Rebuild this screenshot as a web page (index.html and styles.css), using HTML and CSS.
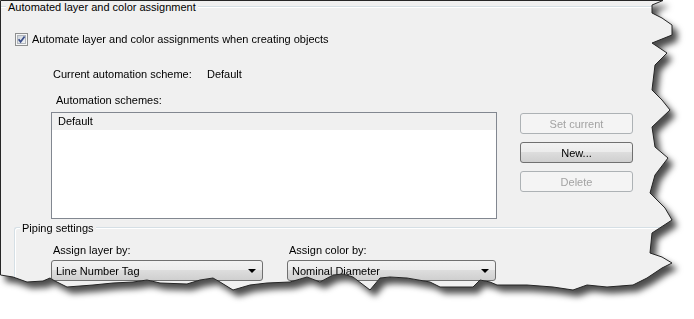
FILE: index.html
```html
<!DOCTYPE html>
<html lang="en">
<head>
<meta charset="UTF-8">
<meta name="viewport" content="width=device-width, initial-scale=1.0">
<title>Automated layer and color assignment</title>
<link rel="stylesheet" href="styles.css">
</head>
<body>

<div class="shot">
  <div class="panel">
    <div class="group main">
      <div class="group-title">Automated layer and color assignment</div>

      <label class="check-row">
        <svg class="checkbox" width="13" height="13" viewBox="0 0 13 13">
          <defs>
            <linearGradient id="cbFill" x1="0" y1="0" x2="1" y2="1">
              <stop offset="0" stop-color="#cdd3da"/>
              <stop offset="1" stop-color="#f4f6f8"/>
            </linearGradient>
          </defs>
          <rect x="0.5" y="0.5" width="12" height="12" fill="#f6f6f6" stroke="#8e8f8f"/>
          <rect x="2.5" y="2.5" width="8" height="8" fill="url(#cbFill)" stroke="#b2b7bd"/>
          <path d="M3.6 6.3 L5.6 8.8 L9.6 3.4" stroke="#3c4f8a" stroke-width="1.7" fill="none"/>
        </svg>
        <span>Automate layer and color assignments when creating objects</span>
      </label>

      <div class="scheme-row">
        <span class="scheme-name">Current automation scheme:</span>
        <span>Default</span>
      </div>

      <div class="schemes-label">Automation schemes:</div>

      <div class="schemes">
        <div class="listbox">
          <div class="list-item selected">Default</div>
        </div>
        <div class="buttons">
          <button class="btn" disabled>Set current</button>
          <button class="btn">New...</button>
          <button class="btn" disabled>Delete</button>
        </div>
      </div>

      <div class="group sub">
        <div class="group-title">Piping settings</div>
        <div class="combos">
          <div class="field">
            <div class="field-label">Assign layer by:</div>
            <div class="combo"><span>Line Number Tag</span><i class="arrow"></i></div>
          </div>
          <div class="field">
            <div class="field-label">Assign color by:</div>
            <div class="combo"><span>Nominal Diameter</span><i class="arrow"></i></div>
          </div>
        </div>
      </div>
    </div>
  </div>

  <!-- torn paper outline -->
  <svg class="edge" width="694" height="319" viewBox="0 0 694 319">
    <polygon fill="none" stroke="#262626" stroke-width="1"
      points="0.5,0.5 663,0.5 652,5 652,13 662,18 672,25 672,35 652,43 667,53 655,65 652,90 662,100 670,110 652,127 655,147 668,158 655,175 650,193 665,208 672,220 652,233 650,253 662,257 672,263 662,268 647,278 633,285 607,287 587,285 573,290 553,287 527,285 497,285 490,282 480,280 473,287 440,287 430,282 407,278 390,277 380,278 370,290 353,277 343,274 333,275 320,282 307,277 290,282 267,283 250,285 233,290 220,282 213,278 200,280 187,284 160,283 147,280 133,282 113,283 93,285 67,287 53,280 50,278 43,281 27,282 13,277 0.5,275"/>
  </svg>
</div>

</body>
</html>
```

FILE: styles.css
```css
body {
    margin: 0;
    background-color: #fff;
    font-family: "Liberation Sans", Arial, sans-serif;
    font-size: 11px;
    color: #000;
}

.shot {
    position: relative;
    width: 694px;
    height: 319px;
    filter: drop-shadow(5px 6px 3px rgba(0, 0, 0, 0.7));
}

.panel {
    width: 694px;
    height: 319px;
    box-sizing: border-box;
    padding-top: 6px;
    background-color: #f0f0f0;
    line-height: 14px;
    clip-path: polygon(0 0, 663px 0, 652px 5px, 652px 13px, 662px 18px, 672px 25px, 672px 35px, 652px 43px, 667px 53px, 655px 65px, 652px 90px, 662px 100px, 670px 110px, 652px 127px, 655px 147px, 668px 158px, 655px 175px, 650px 193px, 665px 208px, 672px 220px, 652px 233px, 650px 253px, 662px 257px, 672px 263px, 662px 268px, 647px 278px, 633px 285px, 607px 287px, 587px 285px, 573px 290px, 553px 287px, 527px 285px, 497px 285px, 490px 282px, 480px 280px, 473px 287px, 440px 287px, 430px 282px, 407px 278px, 390px 277px, 380px 278px, 370px 290px, 353px 277px, 343px 274px, 333px 275px, 320px 282px, 307px 277px, 290px 282px, 267px 283px, 250px 285px, 233px 290px, 220px 282px, 213px 278px, 200px 280px, 187px 284px, 160px 283px, 147px 280px, 133px 282px, 113px 283px, 93px 285px, 67px 287px, 53px 280px, 50px 278px, 43px 281px, 27px 282px, 13px 277px, 0 275px);
}

.edge {
    position: absolute;
    left: 0;
    top: 0;
}

/* group boxes */
.group {
    border-top: 1px solid #d5dfe5;
    box-shadow: inset 0 1px 0 #fff;
}

.group-title {
    width: fit-content;
    margin: -7px 0 0 6px;
    padding: 0 2px;
    background-color: #f0f0f0;
}

.sub {
    margin: 8px 0 0 14px;
    border-left: 1px solid #d5dfe5;
    border-top-left-radius: 3px;
    box-shadow: inset 1px 1px 0 #fff;
    height: 80px;
}

.sub .group-title {
    margin-left: 5px;
}

/* checkbox row */
.check-row {
    display: flex;
    align-items: center;
    gap: 4px;
    margin-top: 18px;
    padding-left: 15px;
}

.checkbox {
    display: block;
}

.scheme-row {
    display: flex;
    margin-top: 21px;
    padding-left: 53px;
}

.scheme-name {
    width: 154px;
}

.schemes-label {
    margin-top: 12px;
    padding-left: 56px;
}

/* list + buttons */
.schemes {
    display: flex;
    align-items: flex-start;
    gap: 23px;
    margin-top: 5px;
    padding-left: 51px;
}

.listbox {
    width: 446px;
    height: 107px;
    box-sizing: border-box;
    border: 1px solid #828790;
    background-color: #fff;
}

.list-item {
    height: 17px;
    line-height: 17px;
    padding-left: 6px;
}

.list-item.selected {
    background-color: #f0f0f0;
}

.buttons {
    display: flex;
    flex-direction: column;
    gap: 8px;
    padding-top: 1px;
}

.btn {
    width: 113px;
    height: 21px;
    box-sizing: border-box;
    padding: 0;
    border: 1px solid #707070;
    border-radius: 3px;
    background: linear-gradient(#f2f2f2 0%, #ebebeb 50%, #dddddd 50%, #cfcfcf 100%);
    font-family: inherit;
    font-size: 11px;
    color: #000;
}

.btn:disabled {
    border-color: #adb2b5;
    background: #f4f4f4;
    color: #a3a3a3;
}

/* combo boxes */
.combos {
    display: grid;
    grid-template-columns: 212px 209px;
    column-gap: 24px;
    margin-top: 8px;
    padding-left: 36px;
}

.field-label {
    padding-left: 2px;
}

.combo {
    display: flex;
    align-items: center;
    justify-content: space-between;
    height: 21px;
    box-sizing: border-box;
    margin-top: 3px;
    padding: 0 6px 0 4px;
    border: 1px solid #707070;
    border-radius: 3px;
    background: linear-gradient(#f2f2f2 0%, #ebebeb 50%, #dddddd 50%, #cfcfcf 100%);
}

.arrow {
    width: 0;
    height: 0;
    border-left: 4px solid transparent;
    border-right: 4px solid transparent;
    border-top: 4px solid #000;
}
```
